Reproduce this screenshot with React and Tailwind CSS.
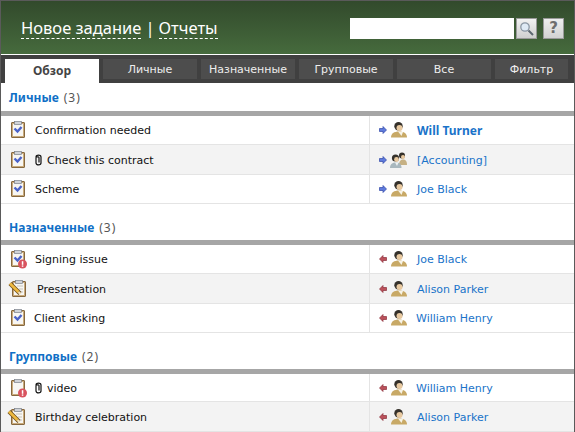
const Clipboard = ({ kind }) => (
  <svg width="18" height="18" viewBox="0 0 18 18" className="shrink-0 overflow-visible">
    <rect x="0.5" y="1.5" width="13" height="15" rx="0.5" fill="#c9ab7c" stroke="#86683f" />
    <rect x="2" y="3" width="10" height="12" fill="#f7f6f3" />
    <rect x="3.5" y="0.5" width="7" height="3" fill="#d0d3d8" stroke="#7b808b" strokeWidth="0.7" />
    {(kind === "check" || kind === "alert") && (
      <path d="M3.5 7.5 L6.5 10.5 L10.5 6" fill="none" stroke="#4a62c8" strokeWidth="2.4" />
    )}
    {kind === "pencil" && (
      <>
        <path d="M5 6 H11 M7 9 H11 M9 12 H11" stroke="#c9c4b8" />
        <path d="M-2 3.5 L8 13.5" stroke="#6d4f20" strokeWidth="4.2" />
        <path d="M-2 3.5 L6.5 12" stroke="#eeb93f" strokeWidth="2.6" />
        <path d="M6.5 12 L8.5 14" stroke="#f3dfb8" strokeWidth="2.4" />
      </>
    )}
    {(kind === "alert" || kind === "video") && (
      <>
        <circle cx="11.5" cy="14" r="4.5" fill="#d9535f" />
        <rect x="10.8" y="11.2" width="1.5" height="3.6" fill="#fff" />
        <rect x="10.8" y="15.4" width="1.5" height="1.4" fill="#fff" />
      </>
    )}
  </svg>
);

const Clip = () => (
  <svg width="7" height="12" viewBox="0 0 7 12" className="shrink-0">
    <path d="M1 3 C1 0.5 6 0.5 6 3 V9 C6 11.5 1 11.5 1 9 V3.5 C1 2.5 4 2.5 4 3.5 V8.5" fill="none" stroke="#111" strokeWidth="1.2" />
  </svg>
);

const Arrow = ({ out }) =>
  out ? (
    <svg width="8" height="8" viewBox="0 0 8 8" className="shrink-0">
      <path d="M0.5 2.5 H4 V0.5 L7.5 4 L4 7.5 V5.5 H0.5 Z" fill="#5f7bdc" stroke="#2f46a8" strokeWidth="0.7" />
    </svg>
  ) : (
    <svg width="8" height="8" viewBox="0 0 8 8" className="shrink-0">
      <path d="M7.5 2.5 H4 V0.5 L0.5 4 L4 7.5 V5.5 H7.5 Z" fill="#bb515b" stroke="#8b2f3a" strokeWidth="0.7" />
    </svg>
  );

const Person = ({ group }) => (
  <svg width="16" height="16" viewBox="0 0 16 16" className="shrink-0 overflow-visible">
    {group ? (
      <>
        <circle cx="11" cy="3.5" r="3" fill="#35312b" />
        <ellipse cx="12" cy="5" rx="2" ry="2" fill="#e8c9a0" />
        <path d="M8 13 C8 9 10 7.5 12 7.5 C14.5 7.5 16 9 16 13 Z" fill="#c6b184" />
        <circle cx="4.5" cy="6" r="3.6" fill="#35312b" />
        <ellipse cx="5.5" cy="7.5" rx="2.4" ry="2.4" fill="#e8c9a0" />
        <path d="M-1 16 C-1 12 1.5 10.5 5 10.5 C8.5 10.5 10.5 12 10.5 16 Z" fill="#a9b8be" />
        <path d="M4 10.5 L6 14 L7.5 10.5 Z" fill="#eef2f2" />
      </>
    ) : (
      <>
        <circle cx="7.5" cy="4.2" r="4.2" fill="#35312b" />
        <ellipse cx="8.5" cy="6" rx="3" ry="3" fill="#e8c9a0" />
        <path d="M0 15.5 C0 11.5 3 9.5 8 9.5 C13 9.5 16 11.5 16 15.5 Z" fill="#c8a966" />
        <path d="M7 9.5 L10.5 14 L12 10 Z" fill="#f7f3e6" />
      </>
    )}
  </svg>
);

const tabs = [
  ["Обзор", "w-[94px]"],
  ["Личные", "w-[94px]"],
  ["Назначенные", "w-[94px]"],
  ["Групповые", "w-[94px]"],
  ["Все", "w-[94px]"],
  ["Фильтр", "w-[73px]"],
];

const sections = [
  {
    title: "Личные",
    count: 3,
    head: "h-[28px] pb-[4px]",
    rows: [
      { icon: "check", text: "Confirmation needed", out: true, who: "Will Turner", bold: true },
      { icon: "check", clip: true, text: "Check this contract", out: true, who: "[Accounting]", group: true },
      { icon: "check", text: "Scheme", out: true, who: "Joe Black" },
    ],
  },
  {
    title: "Назначенные",
    count: 3,
    head: "h-[36px] pb-[3px]",
    rows: [
      { icon: "alert", text: "Signing issue", who: "Joe Black" },
      { icon: "pencil", text: "Presentation", who: "Alison Parker", shift: "ml-[7px]", box: "ml-[1px]" },
      { icon: "check", text: "Client asking", who: "William Henry", shift: "ml-[5px]", whoShift: "ml-[9px]" },
    ],
  },
  {
    title: "Групповые",
    count: 2,
    head: "h-[36px] pb-[3px]",
    rows: [
      { icon: "video", clip: true, text: "video", who: "William Henry", short: true, whoShift: "ml-[9px]" },
      { icon: "pencil", text: "Birthday celebration", who: "Alison Parker" },
    ],
  },
];

export default function App() {
  return (
    <div className="w-[575px] h-[432px] overflow-hidden bg-white border-x border-t border-[#5a5a5a] font-['DejaVu_Sans',sans-serif] text-[11px] text-[#111]">
      <div className="h-[53px] flex items-center justify-between pl-[20px] pr-[10px] pt-[2px] bg-gradient-to-b from-[#324a2c] to-[#466b3d]">
        <div className="flex items-center gap-[4px] text-[16.5px] text-white font-['Noto_Sans',sans-serif]">
          <span className="border-b border-dashed border-white leading-[20px]">Новое задание</span>
          <span>|</span>
          <span className="border-b border-dashed border-white leading-[20px]">Отчеты</span>
        </div>
        <div className="flex items-center">
          <input className="w-[164px] h-[21px] bg-white" />
          <button className="w-[21px] h-[21px] ml-[2px] flex items-center justify-center bg-gradient-to-b from-[#f2f2f2] to-[#cfcfcf] border border-[#9a9a9a]">
            <svg width="15" height="15" viewBox="0 0 15 15">
              <circle cx="6" cy="6" r="4.2" fill="#dfeaf5" stroke="#8a96a3" strokeWidth="1.3" />
              <path d="M9.5 9.5 L14 14" stroke="#5c6670" strokeWidth="2" />
            </svg>
          </button>
          <button className="w-[21px] h-[21px] ml-[6px] flex items-center justify-center bg-gradient-to-b from-[#eeeeee] to-[#d2d2d2] border border-[#9a9a9a] text-[15px] font-bold text-[#6e6e6e]">
            ?
          </button>
        </div>
      </div>
      <div className="h-px bg-white" />
      <div className="h-[28px] bg-[#404040] flex items-start gap-[4px] pl-[4px] pt-[4px]">
        {tabs.map(([name, width], i) =>
          i === 0 ? (
            <div key={name} className={`${width} h-[24px] pb-px bg-white flex items-center justify-center font-bold text-[12px] font-['Noto_Sans',sans-serif] text-[#444]`}>
              {name}
            </div>
          ) : (
            <div key={name} className={`${width} h-[20px] pt-[3px] bg-[#4d4d4d] flex items-center justify-center text-[#eeeeee]`}>
              {name}
            </div>
          )
        )}
      </div>
      {sections.map((s) => (
        <section key={s.title}>
          <div className={`${s.head} flex items-end pl-[8px] font-['Noto_Sans',sans-serif] text-[12px]`}>
            <span className="font-bold text-[#0f6fc6]">{s.title}</span>
            <span className="ml-[5px] text-[#555] tracking-[1px]">({s.count})</span>
          </div>
          <div className="h-[5px] bg-[#a6a6a6]" />
          {s.rows.map((r, ri) => (
            <div key={r.text} className={`${ri === 1 ? "h-[30px]" : r.short ? "h-[28px]" : "h-[29px]"} flex border-b border-[#e4e4e4] ${ri % 2 ? "bg-[#f3f3f3]" : "bg-white"}`}>
              <div className="w-[369px] flex items-center pl-[10px] border-r border-[#e4e4e4]">
                <div className={r.box || ""}><Clipboard kind={r.icon} /></div>
                <div className={`flex items-center gap-[5px] ${r.shift || "ml-[6px]"}`}>
                  {r.clip && <Clip />}
                  <span className="pt-[3px]">{r.text}</span>
                </div>
              </div>
              <div className="flex-1 flex items-center pl-[9px]">
                <Arrow out={r.out} />
                <div className="ml-[4px]"><Person group={r.group} /></div>
                {r.bold ? (
                  <span className="ml-[10px] pt-px text-[#1a73c9] font-bold text-[12px] font-['Noto_Sans',sans-serif]">{r.who}</span>
                ) : (
                  <span className={`${r.whoShift || "ml-[10px]"} pt-[3px] text-[#1a73c9]`}>{r.who}</span>
                )}
              </div>
            </div>
          ))}
        </section>
      ))}
    </div>
  );
}
